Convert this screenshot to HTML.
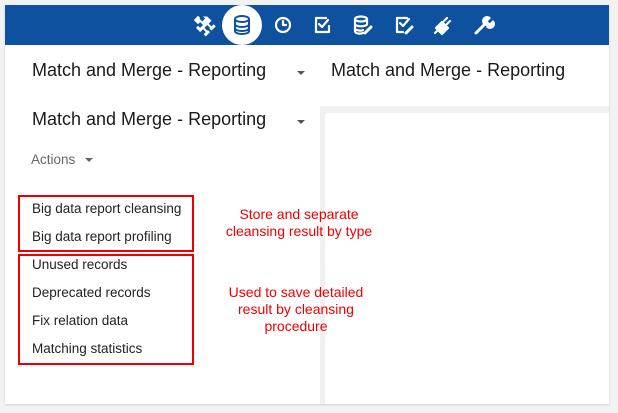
<!DOCTYPE html>
<html><head><style>
body{margin:0;width:618px;height:413px;background:#f2f2f2;position:relative;overflow:hidden;font-family:"Liberation Sans",sans-serif}
.box{position:absolute;left:5px;top:5px;width:604px;height:399px;background:#fff;box-shadow:0 1px 2px rgba(0,0,0,.15)}
.bar{position:absolute;left:5px;top:5px;width:604px;height:40px;background:#0e519e}
.t{position:absolute;font-size:18px;color:#1a1a1a;white-space:nowrap}
.caret{position:absolute;width:0;height:0;border-left:4px solid transparent;border-right:4px solid transparent;border-top:4px solid #555}
.it{position:absolute;left:32px;font-size:13.5px;color:#222}
.red{position:absolute;border:2px solid #e00}
.ann{position:absolute;color:#e00;font-size:14px;text-align:center;line-height:17px;width:200px}
</style></head><body>
<div class="box"></div>
<div class="bar"></div>
<div style="position:absolute;left:222px;top:5px;width:40px;height:40px;border-radius:50%;background:#fff"></div>
<svg style="position:absolute;left:0;top:0" width="618" height="50" fill="none" stroke="#fff" stroke-width="2.2" stroke-linecap="round" stroke-linejoin="round">
<g transform="translate(203,25) rotate(45)" fill="#fff" stroke="none"><path d="M-3,-9h6v4h4v-3h3v6h-3v-1h-4v4h4v-1h3v6h-3v-3h-4v4h-6v-3h3v-4h-4v3h-6v-6h3v1h4v-4h-3z"/></g>
<g transform="translate(242,25)" stroke="#0e519e" stroke-width="2"><ellipse cx="0" cy="-6" rx="7" ry="3"/><path d="M-7,-6v12c0,4 14,4 14,0v-12M-7,-1c0,4 14,4 14,0M-7,3c0,4 14,4 14,0"/></g>
<g transform="translate(283,25)"><circle r="7"/><path d="M0,-4v4h3"/></g>
<g transform="translate(322,25)"><path d="M4,-7h-10v14h13v-6"/><path d="M-3,-1l3,3l6,-7"/></g>
<g transform="translate(362,25)"><ellipse cx="-1" cy="-6" rx="6" ry="2.5"/><path d="M-7,-6v12c0,3 6,3 8,2M5,-6v5M-7,-1c0,3 12,3 12,0M-7,3c0,3 8,3 8,2"/><path d="M3,8l6,-6" stroke-width="3"/></g>
<g transform="translate(403,25)"><path d="M4,-7h-10v14h6"/><path d="M-3,-2l3,3l6,-7"/><path d="M3,8l6,-6" stroke-width="3"/></g>
<g transform="translate(442,25)" fill="#fff"><path d="M-7,8l4,-4M-4,5l-2,-2l6,-6l6,6l-6,6zM2,-4l3,-3M5,-1l3,-3" stroke-width="2.2"/></g>
<g transform="translate(483,25)"><path d="M-7,8l9,-9" stroke-width="3"/><path d="M1,-1a4,4 0 1 1 6,-6l-3,3l1,2l2,1l3,-3a4,4 0 0 1 -6,6" fill="#fff" stroke-width="1.5"/></g>
</svg>
<div class="t" style="left:32px;top:60px">Match and Merge - Reporting</div>
<div class="caret" style="left:297px;top:71px"></div>
<div class="t" style="left:331px;top:60px">Match and Merge - Reporting</div>
<div style="position:absolute;left:320px;top:106px;width:289px;height:298px;background:#f0f0f0"></div>
<div style="position:absolute;left:325px;top:113px;width:284px;height:291px;background:#fff;border-radius:3px 0 0 0"></div>
<div class="t" style="left:32px;top:109px">Match and Merge - Reporting</div>
<div class="caret" style="left:297px;top:120px"></div>
<div style="position:absolute;left:31px;top:152px;font-size:13.5px;color:#666">Actions</div>
<div class="caret" style="left:85px;top:158px;border-top-color:#666"></div>
<div class="red" style="left:18px;top:195px;width:172px;height:53px"></div>
<div class="red" style="left:18px;top:254px;width:172px;height:107px"></div>
<div class="it" style="top:201px">Big data report cleansing</div>
<div class="it" style="top:229px">Big data report profiling</div>
<div class="it" style="top:257px">Unused records</div>
<div class="it" style="top:285px">Deprecated records</div>
<div class="it" style="top:313px">Fix relation data</div>
<div class="it" style="top:341px">Matching statistics</div>
<div class="ann" style="left:199px;top:206px">Store and separate<br>cleansing result by type</div>
<div class="ann" style="left:196px;top:284px">Used to save detailed<br>result by cleansing<br>procedure</div>
</body></html>
